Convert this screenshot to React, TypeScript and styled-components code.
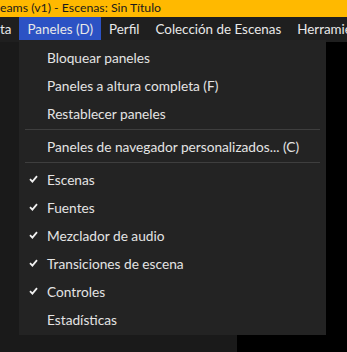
import React from "react";
import styled, { createGlobalStyle } from "styled-components";

const Global = createGlobalStyle`
  html, body { margin: 0; padding: 0; background: #181818; }
  body { width: 347px; height: 352px; overflow: hidden; font-family: Lato, "Open Sans", sans-serif; }
  #root { width: 347px; height: 352px; }
`;

const Window = styled.div`
  position: relative;
  width: 347px;
  height: 352px;
  display: flex;
  flex-direction: column;
  overflow: hidden;
`;

const TitleBar = styled.div`
  height: 17px;
  background: #ffb900;
  color: #1b1b1b;
  font-family: Lato, "Noto Sans", sans-serif;
  font-size: 12.3px;
  line-height: 15px;
  white-space: nowrap;
`;

const MenuBar = styled.div`
  height: 25px;
  background: #1f1f1f;
  display: flex;
  align-items: stretch;
  white-space: nowrap;
`;

const MenuBarItem = styled.div<{ $active?: boolean; $pl?: number; $pr?: number }>`
  display: flex;
  align-items: center;
  height: 23px;
  padding: 0 ${(p) => p.$pr ?? 8}px 0 ${(p) => p.$pl ?? 8}px;
  font-size: 13.4px;
  color: #e8e8e8;
  background: ${(p) => (p.$active ? "#2c52c4" : "transparent")};
`;

const Body = styled.div`
  flex: 1;
  display: flex;
`;

const LeftPanel = styled.div`
  width: 237px;
  background: #1a1a1a;
`;

const RightPanel = styled.div`
  flex: 1;
  background: #000;
`;

const Dropdown = styled.div`
  position: absolute;
  left: 19px;
  top: 40px;
  width: 307px;
  background: #232323;
  padding: 3px 0 2px 0;
  box-sizing: border-box;
  display: flex;
  flex-direction: column;
`;

const Item = styled.div`
  height: 28px;
  display: flex;
  align-items: center;
  font-size: 13.7px;
  color: #e4e4e4;
  white-space: nowrap;
`;

const CheckCell = styled.div`
  width: 28px;
  display: flex;
  align-items: center;
  justify-content: center;
`;

const Separator = styled.div`
  height: 5px;
  display: flex;
  align-items: center;
  padding: 0 6px;
  &::after {
    content: "";
    flex: 1;
    height: 1px;
    background: #3e3e3e;
  }
`;

const Check = () => (
  <svg width="9" height="8" viewBox="0 0 9 8">
    <path d="M1 4.2 L3.4 6.6 L8 1.2" stroke="#f0f0f0" strokeWidth="1.8" fill="none" />
  </svg>
);

type Entry = { label: string; checked?: boolean } | "sep";

const entries: Entry[] = [
  { label: "Bloquear paneles" },
  { label: "Paneles a altura completa (F)" },
  { label: "Restablecer paneles" },
  "sep",
  { label: "Paneles de navegador personalizados... (C)" },
  "sep",
  { label: "Escenas", checked: true },
  { label: "Fuentes", checked: true },
  { label: "Mezclador de audio", checked: true },
  { label: "Transiciones de escena", checked: true },
  { label: "Controles", checked: true },
  { label: "Estadísticas" },
];

export default function App() {
  return (
    <Window>
      <Global />
      <TitleBar>eams (v1) - Escenas: Sin Título</TitleBar>
      <MenuBar>
        <MenuBarItem $pl={0} $pr={8}>ta</MenuBarItem>
        <MenuBarItem $active>Paneles (D)</MenuBarItem>
        <MenuBarItem>Perfil</MenuBarItem>
        <MenuBarItem>Colección de Escenas</MenuBarItem>
        <MenuBarItem>Herramientas</MenuBarItem>
      </MenuBar>
      <Body>
        <LeftPanel />
        <RightPanel />
      </Body>
      <Dropdown>
        {entries.map((e, i) =>
          e === "sep" ? (
            <Separator key={i} />
          ) : (
            <Item key={i}>
              <CheckCell>{e.checked ? <Check /> : null}</CheckCell>
              {e.label}
            </Item>
          )
        )}
      </Dropdown>
    </Window>
  );
}
